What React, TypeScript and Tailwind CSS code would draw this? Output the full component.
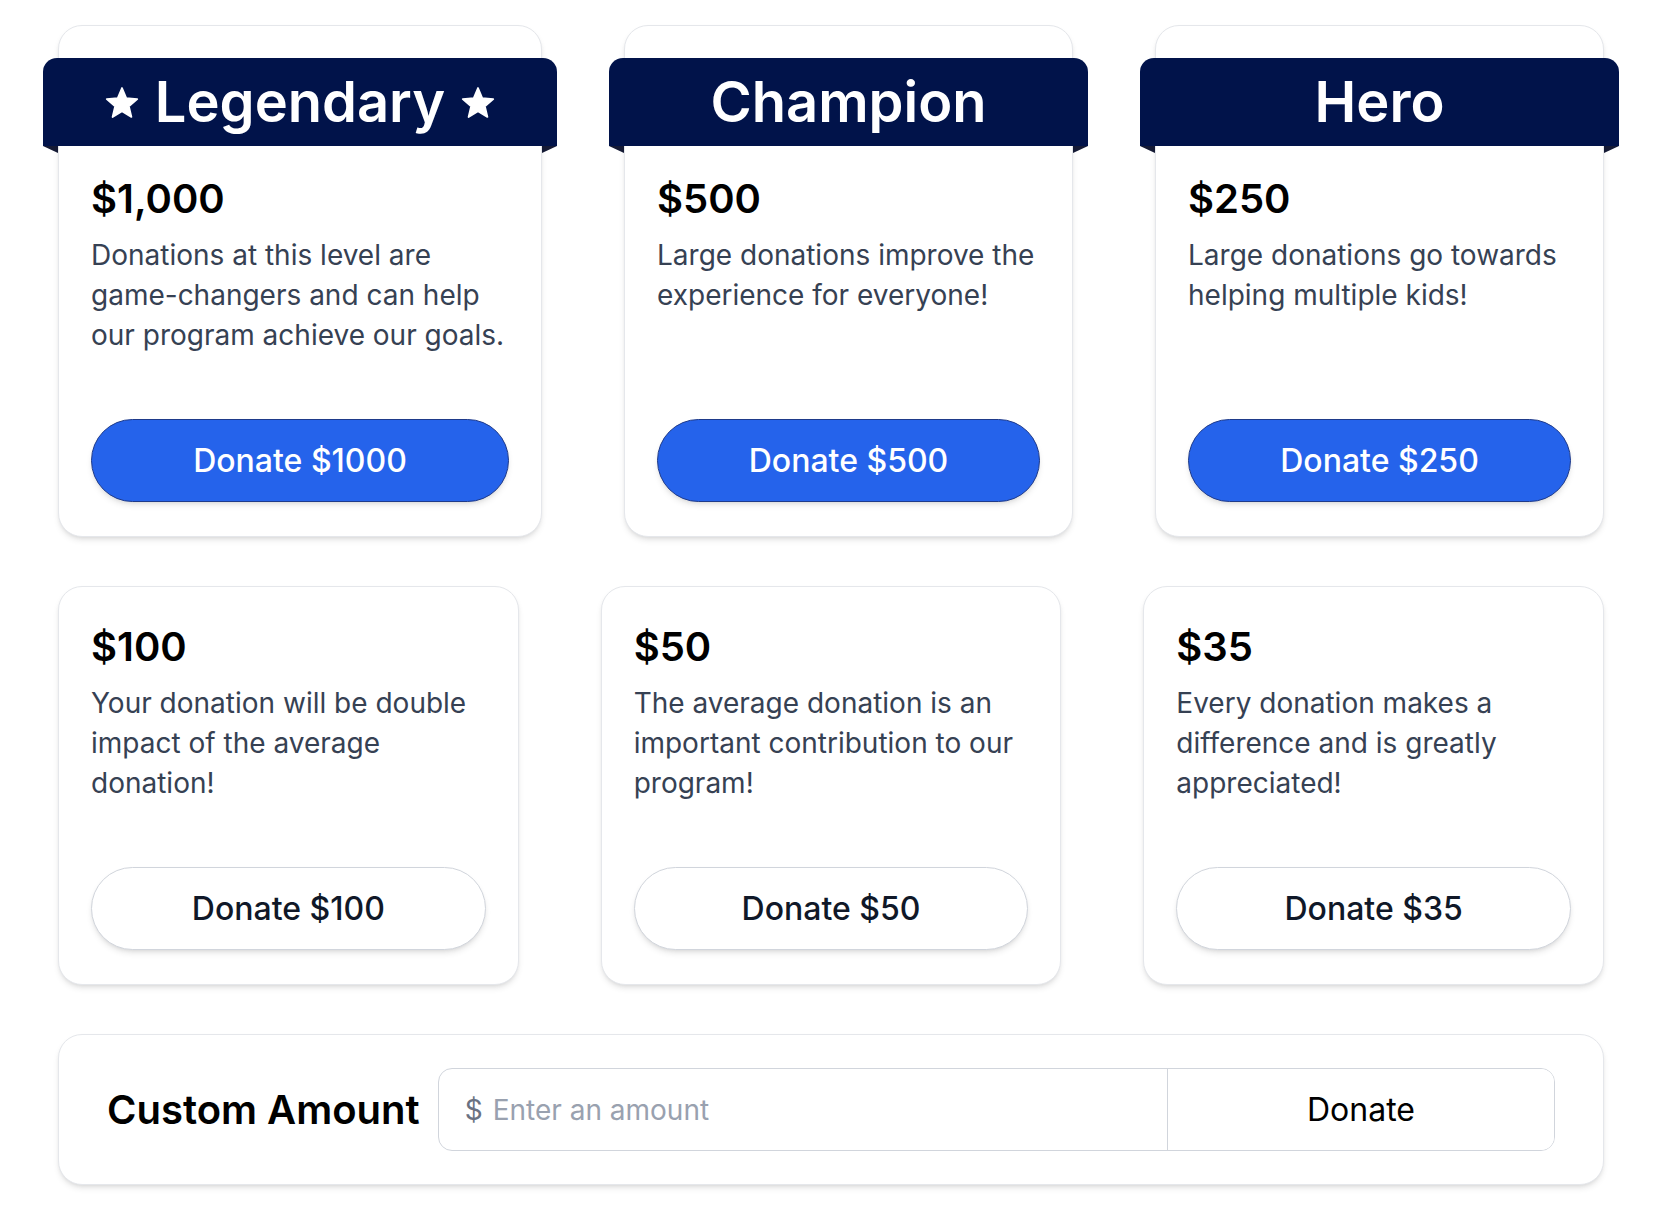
import React from "react";

type Tier = {
  amount: number;
  price: string;
  description: string;
};

const featured: (Tier & { title: string; stars?: boolean; width: string })[] = [
  {
    title: "Legendary",
    stars: true,
    amount: 1000,
    price: "$1,000",
    description:
      "Donations at this level are game-changers and can help our program achieve our goals.",
    width: "w-[484px]",
  },
  {
    title: "Champion",
    amount: 500,
    price: "$500",
    description: "Large donations improve the experience for everyone!",
    width: "w-[449px]",
  },
  {
    title: "Hero",
    amount: 250,
    price: "$250",
    description: "Large donations go towards helping multiple kids!",
    width: "w-[449px]",
  },
];

const regular: Tier[] = [
  {
    amount: 100,
    price: "$100",
    description: "Your donation will be double impact of the average donation!",
  },
  {
    amount: 50,
    price: "$50",
    description:
      "The average donation is an important contribution to our program!",
  },
  {
    amount: 35,
    price: "$35",
    description: "Every donation makes a difference and is greatly appreciated!",
  },
];

function StarIcon() {
  return (
    <svg viewBox="0 0 34 31" className="h-[31px] w-[34px]" aria-hidden>
      <path
        d="M17 1L21.23 11.18L32.22 12.06L23.85 19.22L26.4 29.94L17 24.2L7.6 29.94L10.15 19.22L1.78 12.06L12.77 11.18Z"
        fill="white"
        stroke="white"
        strokeWidth="1.8"
        strokeLinejoin="round"
      />
    </svg>
  );
}

function Banner({ title, stars }: { title: string; stars?: boolean }) {
  return (
    <div className="relative -mx-12 mb-[25px]">
      <div className="flex h-[88px] items-center justify-center gap-4 rounded-t-[14px] bg-[#01134a] text-[56px] font-semibold leading-none text-white">
        {stars && <StarIcon />}
        <span>{title}</span>
        {stars && <StarIcon />}
      </div>
      {/* ribbon folds tucked behind the card */}
      <span className="absolute left-0 top-full h-0 w-0 border-l-[15px] border-t-[7px] border-l-transparent border-t-[#151a35]" />
      <span className="absolute right-0 top-full h-0 w-0 border-r-[15px] border-t-[7px] border-r-transparent border-t-[#151a35]" />
    </div>
  );
}

function TierBody({ tier, primary }: { tier: Tier; primary?: boolean }) {
  return (
    <>
      <h3 className="text-[40px] font-semibold leading-[56px] text-black">
        {tier.price}
      </h3>
      <p className="mt-2 flex-1 text-[28px] leading-10 text-gray-700">
        {tier.description}
      </p>
      <button
        className={
          primary
            ? "mt-16 h-[83px] w-full rounded-full border border-[#1e3a8a] bg-[#2563eb] text-[32px] font-medium text-white shadow-md"
            : "mt-16 h-[83px] w-full rounded-full border border-gray-300 bg-white text-[32px] font-medium text-gray-900 shadow-md"
        }
      >
        Donate ${tier.amount}
      </button>
    </>
  );
}

export default function App() {
  return (
    <div className="min-h-screen bg-white font-['Inter',sans-serif] antialiased">
      <div className="ml-[58px] w-[1546px] pt-[25px]">
        <div className="flex justify-between">
          {featured.map((tier) => (
            <div
              key={tier.title}
              className={`flex ${tier.width} flex-col rounded-3xl border border-gray-200 bg-white px-8 pb-[34px] pt-8 shadow-md`}
            >
              <Banner title={tier.title} stars={tier.stars} />
              <TierBody tier={tier} primary />
            </div>
          ))}
        </div>

        <div className="mt-[49px] grid grid-cols-3 gap-[82px]">
          {regular.map((tier) => (
            <div
              key={tier.amount}
              className="flex flex-col rounded-3xl border border-gray-200 bg-white px-8 pb-[34px] pt-8 shadow-md"
            >
              <TierBody tier={tier} />
            </div>
          ))}
        </div>

        <div className="mt-[49px] flex items-center gap-[18px] rounded-3xl border border-gray-200 bg-white px-12 py-[33px] shadow-md">
          <span className="whitespace-nowrap text-[40px] font-semibold text-black">
            Custom Amount
          </span>
          <div className="flex h-[83px] flex-1 overflow-hidden rounded-[14px] border border-gray-300">
            <div className="flex flex-1 items-center gap-[10px] pl-[26px] text-[28px]">
              <span className="text-gray-500">$</span>
              <input
                type="text"
                placeholder="Enter an amount"
                className="flex-1 bg-transparent text-gray-900 outline-none placeholder:text-gray-400"
              />
            </div>
            <button className="w-[387px] border-l border-gray-300 bg-white text-[32px] text-black">
              Donate
            </button>
          </div>
        </div>
      </div>
    </div>
  );
}
